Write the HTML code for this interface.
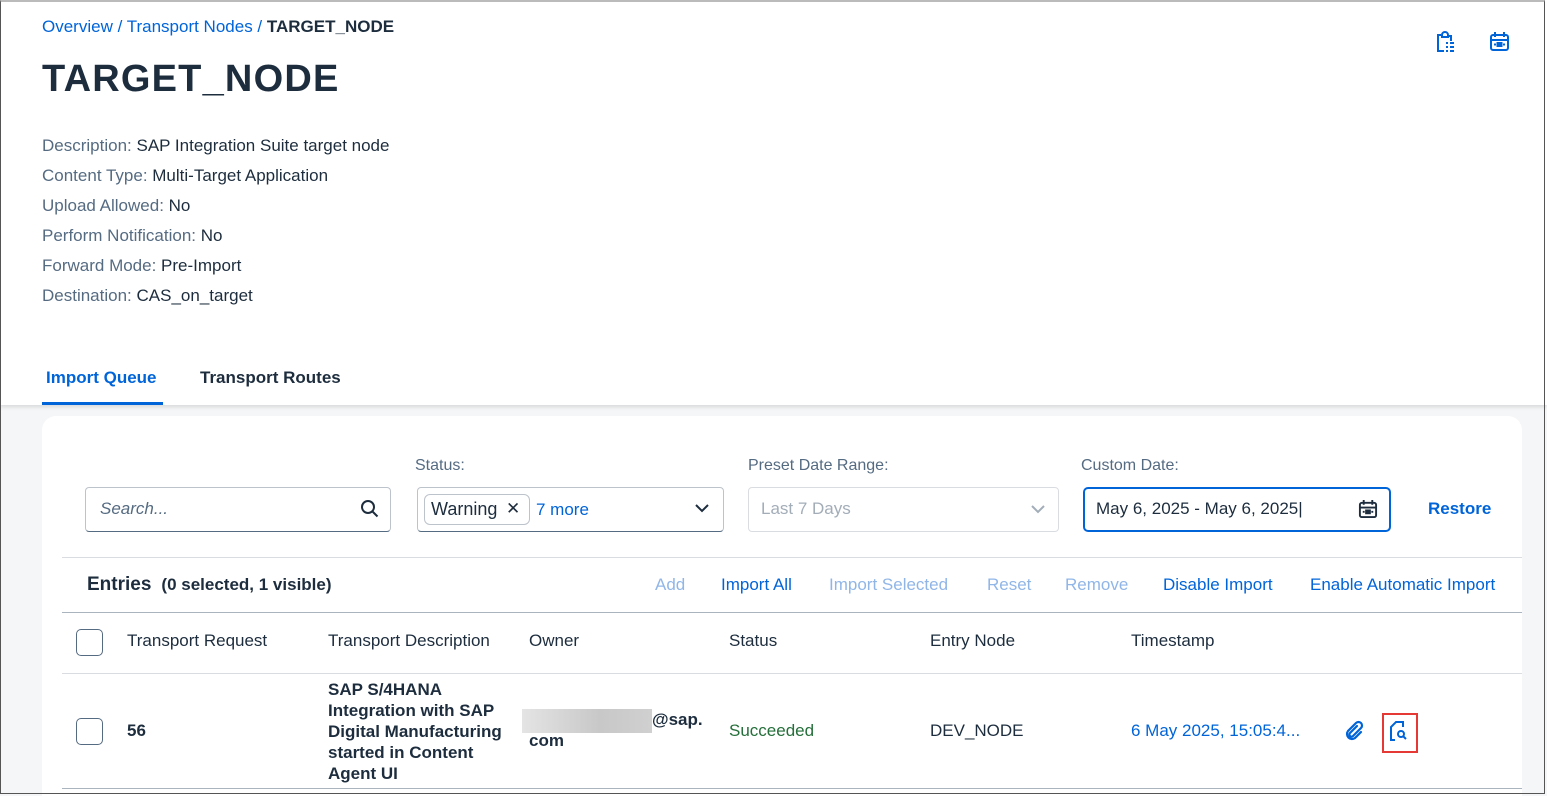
<!DOCTYPE html>
<html><head><meta charset="utf-8"><style>
*{box-sizing:border-box;margin:0;padding:0}
body{width:1547px;height:795px;overflow:hidden;font-family:"Liberation Sans",Arial,sans-serif;background:#f5f6f7;position:relative;color:#1d2d3e}
.frame{position:absolute;left:0;top:0;width:1545px;height:794px;border:1px solid #555;border-top:2px solid #bbb;pointer-events:none;z-index:10}
.hdr{position:absolute;left:0;top:0;width:1547px;height:405px;background:#fff;box-shadow:0 2px 4px rgba(0,0,0,.12)}
.a{position:absolute;white-space:nowrap}
.bc{left:42px;top:17px;font-size:17px;color:#0064d9}
.bc b{color:#1d2d3e;font-weight:bold}
h1{position:absolute;left:42px;top:58px;font-size:38px;font-weight:900;letter-spacing:1.2px;color:#1d2d3e}
.kv{left:42px;font-size:17px;color:#1d2d3e}
.kv span{color:#556b82}
.tab{top:368px;font-size:17px;font-weight:bold}
.card{position:absolute;left:42px;top:416px;width:1480px;height:380px;background:#fff;border-radius:14px 14px 0 0}
.lbl{font-size:16px;color:#556b82}
.inp{position:absolute;height:45px;border:1px solid #bcc3ca;border-bottom:1px solid #556b82;border-radius:4px;background:#fff}
.btn{font-size:17px;color:#0064d9;top:575px}
.dis{color:#90b6e8}
.th{top:631px;font-size:17px;color:#1d2d3e}
.cb{position:absolute;width:27px;height:27px;border:1.5px solid #556b82;border-radius:5px;background:#fff}
.hr{position:absolute;height:1px;background:#d9dde2}
</style></head><body>
<div class="hdr"></div>
<div class="a bc">Overview / Transport Nodes / <b>TARGET_NODE</b></div>
<h1>TARGET_NODE</h1>
<svg class="a" style="left:1434px;top:31px" width="22" height="22" viewBox="0 0 22 22" fill="none" stroke="#0064d9" stroke-width="2"><path d="M7 4H4v16h6"/><path d="M8 4a3 3 0 0 1 6 0v2H8z"/><path d="M15 5h2v5"/><path d="M12 12h2M16 12h4M12 16h2M16 16h4M12 20h2M16 20h4"/></svg>
<svg class="a" style="left:1489px;top:31px" width="21" height="21" viewBox="0 0 21 21" fill="none" stroke="#0064d9" stroke-width="2"><rect x="2" y="4" width="17" height="15" rx="2"/><path d="M6 1v5M15 1v5M2 9h17"/><rect x="8.5" y="12" width="4" height="3" fill="#0064d9"/><path d="M5 13.5h2M14 13.5h2"/></svg>
<div class="a kv" style="top:136px"><span>Description:</span> SAP Integration Suite target node</div>
<div class="a kv" style="top:166px"><span>Content Type:</span> Multi-Target Application</div>
<div class="a kv" style="top:196px"><span>Upload Allowed:</span> No</div>
<div class="a kv" style="top:226px"><span>Perform Notification:</span> No</div>
<div class="a kv" style="top:256px"><span>Forward Mode:</span> Pre-Import</div>
<div class="a kv" style="top:286px"><span>Destination:</span> CAS_on_target</div>
<div class="a tab" style="left:46px;color:#0064d9">Import Queue</div>
<div class="a" style="left:42px;top:402px;width:121px;height:3px;background:#0064d9"></div>
<div class="a tab" style="left:200px">Transport Routes</div>
<div class="card"></div>
<div class="a lbl" style="left:415px;top:457px">Status:</div>
<div class="a lbl" style="left:748px;top:457px">Preset Date Range:</div>
<div class="a lbl" style="left:1081px;top:457px">Custom Date:</div>
<div class="inp" style="left:85px;top:487px;width:306px"></div>
<div class="a" style="left:100px;top:499px;font-size:17px;font-style:italic;color:#556b82">Search...</div>
<svg class="a" style="left:360px;top:499px" width="20" height="20" viewBox="0 0 20 20" fill="none" stroke="#1d2d3e" stroke-width="2"><circle cx="8" cy="8" r="6"/><path d="M12.5 12.5l5 5"/></svg>
<div class="inp" style="left:417px;top:487px;width:307px"></div>
<div class="a" style="left:424px;top:494px;width:106px;height:31px;border:1px solid #bcc3ca;border-radius:6px"></div>
<div class="a" style="left:431px;top:499px;font-size:18px">Warning</div>
<div class="a" style="left:506px;top:499px;font-size:17px">✕</div>
<div class="a" style="left:536px;top:500px;font-size:17px;color:#0064d9">7 more</div>
<svg class="a" style="left:694px;top:502px" width="16" height="12" viewBox="0 0 16 12" fill="none" stroke="#1d2d3e" stroke-width="2"><path d="M2 3l6 6 6-6"/></svg>
<div class="inp" style="left:748px;top:487px;width:311px;border-color:#d9dde2"></div>
<div class="a" style="left:761px;top:499px;font-size:17px;color:#a3adb8">Last 7 Days</div>
<svg class="a" style="left:1030px;top:503px" width="16" height="12" viewBox="0 0 16 12" fill="none" stroke="#a3adb8" stroke-width="2"><path d="M2 3l6 6 6-6"/></svg>
<div class="inp" style="left:1083px;top:487px;width:308px;border:2px solid #0064d9;border-radius:5px"></div>
<div class="a" style="left:1096px;top:499px;font-size:17px">May 6, 2025 - May 6, 2025|</div>
<svg class="a" style="left:1358px;top:499px" width="20" height="20" viewBox="0 0 21 21" fill="none" stroke="#1d2d3e" stroke-width="2"><rect x="2" y="4" width="17" height="15" rx="2"/><path d="M6 1v5M15 1v5M2 9h17"/><rect x="8.5" y="12" width="4" height="3" fill="#1d2d3e"/><path d="M5 13.5h2M14 13.5h2"/></svg>
<div class="a" style="left:1428px;top:499px;font-size:17px;color:#0064d9;font-weight:bold">Restore</div>
<div class="hr" style="left:62px;top:557px;width:1460px"></div>
<div class="a" style="left:87px;top:574px;font-size:19px;font-weight:bold">Entries <span style="font-size:17px">&nbsp;(0 selected, 1 visible)</span></div>
<div class="a btn dis" style="left:655px">Add</div>
<div class="a btn" style="left:721px">Import All</div>
<div class="a btn dis" style="left:829px">Import Selected</div>
<div class="a btn dis" style="left:987px">Reset</div>
<div class="a btn dis" style="left:1065px">Remove</div>
<div class="a btn" style="left:1163px">Disable Import</div>
<div class="a btn" style="left:1310px">Enable Automatic Import</div>
<div class="hr" style="left:62px;top:612px;width:1460px;background:#a9b4be"></div>
<div class="cb" style="left:76px;top:629px"></div>
<div class="a th" style="left:127px">Transport Request</div>
<div class="a th" style="left:328px">Transport Description</div>
<div class="a th" style="left:529px">Owner</div>
<div class="a th" style="left:729px">Status</div>
<div class="a th" style="left:930px">Entry Node</div>
<div class="a th" style="left:1131px">Timestamp</div>
<div class="hr" style="left:62px;top:673px;width:1460px"></div>
<div class="cb" style="left:76px;top:718px"></div>
<div class="a" style="left:127px;top:721px;font-size:17px;font-weight:bold">56</div>
<div class="a" style="left:328px;top:679px;font-size:17px;font-weight:bold;line-height:21px">SAP S/4HANA<br>Integration with SAP<br>Digital Manufacturing<br>started in Content<br>Agent UI</div>
<div class="a" style="left:522px;top:709px;width:130px;height:24px;background:linear-gradient(90deg,#e4e4e4,#c8c8c8 60%,#d0d0d0)"></div>
<div class="a" style="left:652px;top:710px;font-size:17px;font-weight:bold">@sap.</div>
<div class="a" style="left:529px;top:731px;font-size:17px;font-weight:bold">com</div>
<div class="a" style="left:729px;top:721px;font-size:17px;color:#256f3a">Succeeded</div>
<div class="a" style="left:930px;top:721px;font-size:17px">DEV_NODE</div>
<div class="a" style="left:1131px;top:721px;font-size:17px;color:#0064d9">6 May 2025, 15:05:4...</div>
<svg class="a" style="left:1343px;top:720px" width="22" height="22" viewBox="0 0 22 22" fill="none" stroke="#0064d9" stroke-width="2.2" stroke-linecap="round"><path d="M14 6l-7 7a2 2 0 0 0 3 3l8-8a3.5 3.5 0 0 0-5-5l-8 8a5 5 0 0 0 7 7l6-6"/></svg>
<div class="a" style="left:1382px;top:713px;width:36px;height:40px;border:2px solid #e53935"></div>
<svg class="a" style="left:1389px;top:720px" width="22" height="24" viewBox="0 0 22 24" fill="none" stroke="#0064d9" stroke-width="2"><path d="M6 20H2V7l5-5h7v5"/><circle cx="12" cy="14" r="3"/><path d="M14 16l3 3"/></svg>
<div class="hr" style="left:62px;top:788px;width:1460px;background:#a9b4be"></div>
<div class="frame"></div>
</body></html>
